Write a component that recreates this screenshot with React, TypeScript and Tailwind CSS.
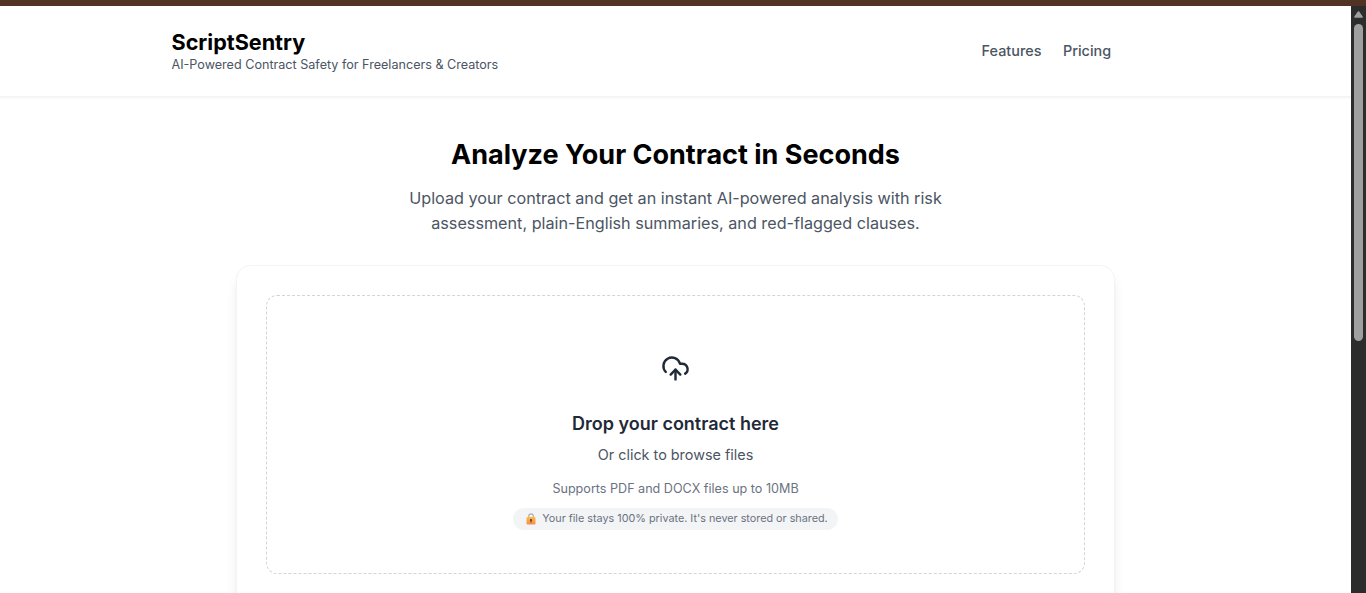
function CloudUpload() {
  return (
    <svg
      className="size-[29px]"
      viewBox="0 0 24 24"
      fill="none"
      stroke="currentColor"
      strokeWidth="2"
      strokeLinecap="round"
      strokeLinejoin="round"
    >
      <path d="M12 13v8" />
      <path d="M4 14.899A7 7 0 1 1 15.71 8h1.79a4.5 4.5 0 0 1 2.5 8.242" />
      <path d="m8 17 4-4 4 4" />
    </svg>
  );
}

function Lock() {
  return (
    <svg className="h-[12px] w-[10px] shrink-0" viewBox="0 0 10 12">
      <defs>
        <linearGradient id="lockBody" x1="0" y1="0" x2="0" y2="1">
          <stop offset="0" stopColor="#fbbd3c" />
          <stop offset="1" stopColor="#f98a52" />
        </linearGradient>
      </defs>
      <path d="M2.7 5V3.2a2.3 2.3 0 0 1 4.6 0V5" fill="none" stroke="#b3acb8" strokeWidth="1.2" />
      <rect x="0.5" y="4" width="9" height="7.5" rx="1" fill="url(#lockBody)" />
      <circle cx="5" cy="7" r="1.1" fill="#5b4038" />
      <path d="M5 7v2.7" stroke="#5b4038" strokeWidth="1" />
    </svg>
  );
}

function Header() {
  return (
    <header className="h-[91px] border-b border-[#f3f4f6] shadow-[0_1px_2px_rgba(0,0,0,0.05)]">
      <div className="mx-auto flex h-[90px] w-[1008px] items-center justify-between pr-[68.4px]">
        <div className="pt-[1px]">
          <div className="h-[26px] text-[21.6px] leading-[26px] font-bold text-black">ScriptSentry</div>
          <p className="h-[20px] text-[12.6px] leading-[20px] text-[#4b5563]">
            AI-Powered Contract Safety for Freelancers &amp; Creators
          </p>
        </div>
        <nav className="flex gap-[21.6px] text-[14.4px] leading-[22px] font-medium text-[#4b5563]">
          <a>Features</a>
          <a>Pricing</a>
        </nav>
      </div>
    </header>
  );
}

function UploadCard() {
  return (
    <section className="mt-[29px] ml-[236px] h-[420px] w-[879px] rounded-[14.4px] border border-[#f3f4f6] bg-white p-[29px] shadow-[0_9px_14px_-3px_rgba(0,0,0,0.1),0_4px_6px_-4px_rgba(0,0,0,0.1)]">
      <div className="flex h-[279px] w-[819px] flex-col items-center rounded-[11px] border border-dashed border-[#d1d5db] pt-[58px] text-center">
        <div className="text-[#1f2937]">
          <CloudUpload />
        </div>
        <h3 className="mt-[28px] text-[18px] leading-[25px] font-semibold text-[#1f2937]">
          Drop your contract here
        </h3>
        <p className="mt-[8px] text-[14.4px] leading-[22px] text-[#4b5563]">Or click to browse files</p>
        <p className="mt-[14px] text-[12.6px] leading-[18px] text-[#6b7280]">
          Supports PDF and DOCX files up to 10MB
        </p>
        <div className="mt-[10px] flex h-[22px] w-[325px] items-center justify-center gap-[6px] rounded-full bg-[#f3f4f6] pl-[3px] text-[10.8px] leading-[14px] text-[#6b7280]">
          <Lock />
          <span>Your file stays 100% private. It's never stored or shared.</span>
        </div>
      </div>
    </section>
  );
}

function Scrollbar() {
  return (
    <div className="flex w-[15px] shrink-0 flex-col items-center bg-[#2c2c2c] pt-[4px]">
      <svg className="h-[9px] w-[9px]" viewBox="0 0 9 9">
        <path d="M4.5 2 8 7H1Z" fill="#9f9f9f" stroke="#9f9f9f" strokeWidth="1.6" strokeLinejoin="round" />
      </svg>
      <div className="mt-[5px] h-[317px] w-[9px] rounded-full bg-[#9f9f9f]" />
    </div>
  );
}

export default function App() {
  return (
    <div className="flex h-[593px] w-[1366px] flex-col overflow-hidden bg-white font-['Inter',sans-serif]">
      <div className="h-[6px] shrink-0 bg-[#503324]" />
      <div className="flex min-h-0 flex-1">
        <div className="w-[1351px] overflow-hidden">
          <Header />
          <main className="pt-[40px]">
            <div className="text-center">
              <h1 className="text-[27px] leading-[36px] font-bold text-black">Analyze Your Contract in Seconds</h1>
              <p className="mx-auto mt-[13px] w-[605px] text-[16.2px] leading-[25.2px] text-[#4b5563]">
                Upload your contract and get an instant AI-powered analysis with risk
                <br />
                assessment, plain-English summaries, and red-flagged clauses.
              </p>
            </div>
            <UploadCard />
          </main>
        </div>
        <Scrollbar />
      </div>
    </div>
  );
}
